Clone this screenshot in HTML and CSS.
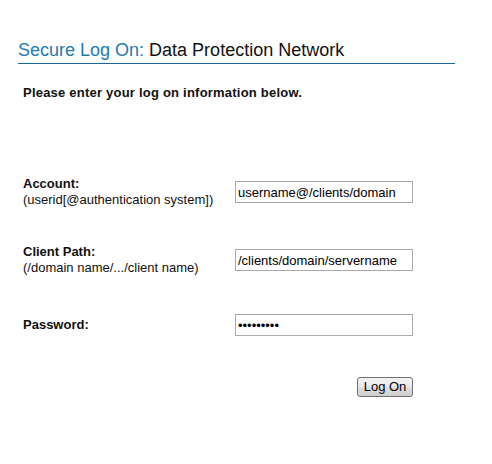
FILE: index.html
```html
<!DOCTYPE html>
<html>
<head>
<meta charset="utf-8">
<title>Secure Log On</title>
<link rel="stylesheet" href="styles.css">
</head>
<body>
<div class="page">
  <h1 class="title"><span class="title-accent">Secure Log On:</span> Data Protection Network</h1>
  <p class="intro">Please enter your log on information below.</p>
  <form class="form">
    <div class="row row-account">
      <div class="label"><span class="label-main">Account:</span><span class="label-sub">(userid[@authentication system])</span></div>
      <input class="field" type="text" value="username@/clients/domain">
    </div>
    <div class="row row-path">
      <div class="label"><span class="label-main">Client Path:</span><span class="label-sub">(/domain name/.../client name)</span></div>
      <input class="field" type="text" value="/clients/domain/servername">
    </div>
    <div class="row row-password">
      <div class="label"><span class="label-main">Password:</span></div>
      <input class="field" type="password" value="123456789">
    </div>
    <div class="row row-submit">
      <div class="label"></div>
      <div class="submit-cell"><button class="btn" type="button">Log On</button></div>
    </div>
  </form>
</div>
</body>
</html>
```
FILE: styles.css
```css
html, body {
  margin: 0;
  padding: 0;
  background: #ffffff;
}
body {
  font-family: "Liberation Sans", Arial, sans-serif;
  color: #111111;
}
.page {
  width: 437px;
  margin-left: 18px;
  padding-top: 39px;
}
.title {
  margin: 0;
  font-size: 18px;
  font-weight: normal;
  line-height: 22px;
  padding-bottom: 2px;
  border-bottom: 1px solid #1669a0;
  color: #111111;
}
.title-accent {
  color: #1f7bb3;
}
.intro {
  margin: 21px 0 0 5px;
  font-size: 13px;
  font-weight: bold;
  line-height: 16px;
  letter-spacing: 0.22px;
}
.form {
  margin: 0 0 0 5px;
}
.row {
  display: grid;
  grid-template-columns: 212px 178px;
  align-items: center;
}
.row-account {
  margin-top: 75px;
}
.row-path {
  margin-top: 36px;
}
.row-password {
  margin-top: 38px;
}
.row-submit {
  margin-top: 41px;
}
.label {
  display: flex;
  flex-direction: column;
  font-size: 13px;
  line-height: 16px;
}
.label-main {
  font-weight: bold;
}
.label-sub {
  font-weight: normal;
}
.field {
  box-sizing: border-box;
  width: 178px;
  height: 22px;
  margin: 0;
  padding: 0 2px;
  border: 1px solid #a9a9a9;
  border-radius: 0;
  font-family: "Liberation Sans", Arial, sans-serif;
  font-size: 13px;
  color: #000000;
  background: #ffffff;
  outline: none;
}
.submit-cell {
  display: flex;
  justify-content: flex-end;
}
.btn {
  box-sizing: border-box;
  width: 56px;
  height: 20px;
  margin: 0;
  padding: 0;
  border: 1px solid #707070;
  border-radius: 3px;
  background: linear-gradient(#f2f2f2 0%, #ebebeb 45%, #dddddd 55%, #cfcfcf 100%);
  font-family: "Liberation Sans", Arial, sans-serif;
  font-size: 13px;
  color: #000000;
  line-height: 18px;
}
```
